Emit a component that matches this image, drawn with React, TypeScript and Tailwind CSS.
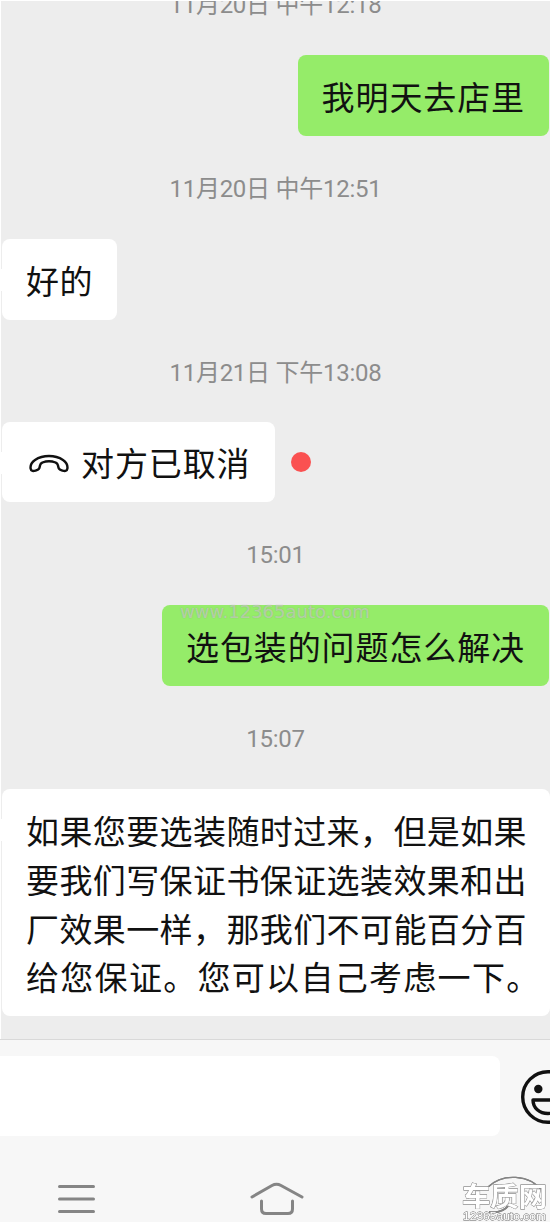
import React from 'react';

interface BubbleProps {
  mine?: boolean;
  className?: string;
  children: React.ReactNode;
}

function Timestamp({ text, className = '' }: { text: string; className?: string }) {
  return (
    <div className={`h-8 shrink-0 text-center text-[24px] leading-8 tracking-[-0.25px] text-[#8c8c8c] whitespace-pre ${className}`}>
      {text}
    </div>
  );
}

function Bubble({ mine = false, className = '', children }: BubbleProps) {
  return (
    <div
      className={`relative rounded-lg px-6 pt-[19px] text-[33px] leading-[49px] whitespace-nowrap text-[#111] ${
        mine ? 'mr-px bg-[#95ec69]' : 'bg-white'
      } ${className}`}
    >
      {!mine && <span className="absolute -left-2 top-[30px] h-[22px] w-2 bg-white" />}
      {children}
    </div>
  );
}

function PhoneIcon() {
  return (
    <svg width="40" height="20" viewBox="0 0 40 20" fill="none" stroke="#111" strokeWidth="2.4" strokeLinejoin="round" className="-mt-px">
      <path d="M1.6 14.5C1.2 11.2 2.6 8.2 6 5.9C14 .7 26 .7 34 5.9C37.4 8.2 38.8 11.2 38.4 14.5C38 17.5 35.5 17.3 33.4 16.6C29.4 15.3 29.5 14.2 29 11.5C28.7 9.8 28.2 9 26.5 8.5C22.5 7 17.5 7 13.5 8.5C11.8 9 11.3 9.8 11 11.5C10.5 14.2 10.6 15.3 6.6 16.6C4.5 17.3 2 17.5 1.6 14.5Z" />
    </svg>
  );
}

function SmileIcon() {
  return (
    <svg width="54" height="54" viewBox="0 0 54 54" fill="none" stroke="#111" strokeWidth="3.4" className="mt-0.5 shrink-0">
      <circle cx="27" cy="27" r="25.3" />
      <circle cx="17.3" cy="19" r="4.2" fill="#111" stroke="none" />
      <circle cx="36.7" cy="19" r="4.2" fill="#111" stroke="none" />
      <path d="M12 30H42C42 38 35.5 43.5 27 43.5S12 38 12 30Z" strokeLinejoin="round" />
    </svg>
  );
}

function Watermark() {
  return (
    <div className="absolute left-[462px] top-[1174px] h-12 w-[88px] overflow-hidden">
      <svg width="88" height="48" viewBox="0 0 88 48" className="[filter:drop-shadow(0.8px_0.8px_0.5px_#777)]">
        <path d="M26 13C40-1 68 0 80 17" fill="none" stroke="#858585" strokeWidth="1.3" />
        <path d="M27 38C37 39 43 36 46 32" fill="none" stroke="#858585" strokeWidth="2" />
        <g fill="#fff" stroke="#a0a0a0" strokeWidth="0.8" paintOrder="stroke">
          <text x="0" y="32" fontSize="26" fontWeight="700" fontFamily="'Noto Sans CJK SC', sans-serif" textLength="85" lengthAdjust="spacingAndGlyphs">车质网</text>
          <text x="1" y="45.5" fontSize="11.5" fontFamily="'Liberation Sans', sans-serif" textLength="83" lengthAdjust="spacingAndGlyphs">12365auto.com</text>
        </g>
      </svg>
    </div>
  );
}

export default function App() {
  return (
    <div className="relative flex h-[1222px] w-[550px] flex-col overflow-hidden bg-[#ededed] font-['Roboto','Noto_Sans_CJK_SC',sans-serif]">
      {/* Messages */}
      <div className="flex h-[1039px] shrink-0 flex-col overflow-hidden border-t border-l border-white">
        <Timestamp text="11月20日 中午12:18" className="-mt-[12px]" />
        <Bubble mine className="mt-[34px] h-[81px] self-end tracking-[0.9px]">我明天去店里</Bubble>
        <Timestamp text="11月20日 中午12:51" className="mt-[37px]" />
        <Bubble className="mt-[34px] ml-px h-[81px] self-start tracking-[0.5px]">好的</Bubble>
        <Timestamp text="11月21日 下午13:08" className="mt-[37px]" />
        <div className="mt-[33px] ml-px flex items-center gap-4">
          <Bubble className="flex h-[80px] items-center gap-3 pb-[15px] pl-[27px] tracking-[0.9px]">
            <PhoneIcon />
            <span>对方已取消</span>
          </Bubble>
          <span className="size-5 rounded-full bg-[#fa5151]" />
        </div>
        <Timestamp text="15:01" className="mt-[37px]" />
        <Bubble mine className="mt-[34px] h-[81px] self-end tracking-[0.9px]">选包装的问题怎么解决</Bubble>
        <Timestamp text="15:07" className="mt-[37px]" />
        <Bubble className="mt-[34px] ml-px h-[227px]">
          <p className="tracking-[0.4px]">如果您要选装随时过来，但是如果</p>
          <p className="tracking-[0.4px]">要我们写保证书保证选装效果和出</p>
          <p className="tracking-[0.4px]">厂效果一样，那我们不可能百分百</p>
          <p className="-mt-px tracking-[1.3px]">给您保证。您可以自己考虑一下。</p>
        </Bubble>
      </div>

      {/* Input bar */}
      <div className="flex h-[105px] shrink-0 items-center gap-[21px] border-t border-[#d9d9d9] bg-[#f7f7f7] pt-2">
        <div className="h-20 w-[500px] shrink-0 rounded-r-lg bg-white" />
        <SmileIcon />
      </div>

      {/* System navigation */}
      <div className="flex flex-1 bg-[#f7f7f7] pt-[38px] pl-[58px]">
        <svg width="38" height="32" viewBox="0 0 38 32" stroke="#858585" strokeWidth="3" strokeLinecap="round">
          <path d="M1.5 4.5H35.5M1.5 17H35.5M1.5 29.5H35.5" />
        </svg>
        <svg width="54" height="34" viewBox="0 0 54 34" fill="none" stroke="#858585" strokeWidth="3" strokeLinecap="round" className="ml-[154px]">
          <path d="M2 15L22 3.5Q26.5 1 31 3.5L52 15" />
          <path d="M11.5 19V27Q11.5 31.5 16 31.5H38Q42.5 31.5 42.5 27V19" />
        </svg>
      </div>

      <div className="absolute left-[180px] top-[601px] text-[18px] leading-[22px] text-white/40 [text-shadow:0_0_1px_rgba(120,120,120,0.6)] font-['DejaVu_Sans',sans-serif]">
        www.12365auto.com
      </div>
      <Watermark />
    </div>
  );
}
